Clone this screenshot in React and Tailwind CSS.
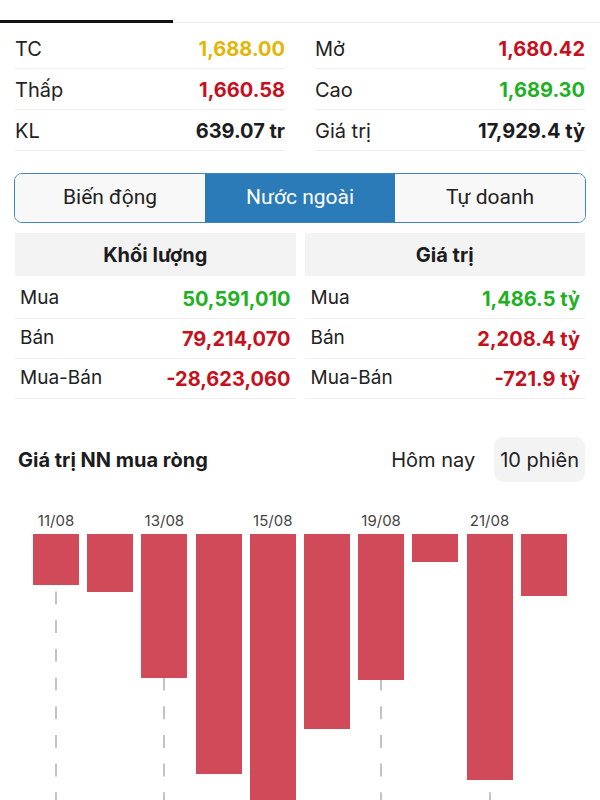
import React from "react";

const YELLOW = "text-[#e3b505]";
const RED = "text-[#c5111d]";
const GREEN = "text-[#1fb024]";
const DARK = "text-[#1c1c1e]";

const statsLeft = [
  ["TC", "1,688.00", YELLOW],
  ["Thấp", "1,660.58", RED],
  ["KL", "639.07 tr", DARK],
];
const statsRight = [
  ["Mở", "1,680.42", RED],
  ["Cao", "1,689.30", GREEN],
  ["Giá trị", "17,929.4 tỷ", DARK],
];

const volRows = [
  ["Mua", "50,591,010", GREEN],
  ["Bán", "79,214,070", RED],
  ["Mua-Bán", "-28,623,060", RED],
];
const valRows = [
  ["Mua", "1,486.5 tỷ", GREEN],
  ["Bán", "2,208.4 tỷ", RED],
  ["Mua-Bán", "-721.9 tỷ", RED],
];

const bars = [
  { h: 51, label: "11/08" },
  { h: 58 },
  { h: 144, label: "13/08" },
  { h: 240 },
  { h: 300, label: "15/08" },
  { h: 195 },
  { h: 146, label: "19/08" },
  { h: 28 },
  { h: 246, label: "21/08" },
  { h: 62 },
];

function StatCol({ rows }) {
  return (
    <div className="flex flex-col">
      {rows.map(([k, v, c]) => (
        <div
          key={k}
          className="h-[41px] pt-[2px] flex items-center justify-between border-b border-[#efefef]"
        >
          <span className="text-[20px] text-[#222]">{k}</span>
          <span className={`text-[20px] font-bold ${c}`}>{v}</span>
        </div>
      ))}
    </div>
  );
}

function Table({ title, rows, pl }) {
  return (
    <div className="flex flex-col">
      <div className="h-[43px] bg-[#f3f3f3] flex items-center justify-center text-[20px] font-bold text-[#1c1c1e]">
        {title}
      </div>
      <div className="h-[3px]" />
      {rows.map(([k, v, c]) => (
        <div
          key={k}
          className={`h-[40px] flex items-center justify-between ${pl} pr-[5px] border-b border-[#efefef]`}
        >
          <span className="text-[19px] text-[#222]">{k}</span>
          <span className={`text-[20px] font-bold ${c}`}>{v}</span>
        </div>
      ))}
    </div>
  );
}

export default function App() {
  return (
    <div className="w-[600px] h-[800px] overflow-hidden bg-white font-['Inter',sans-serif] text-[#1c1c1e]">
      <div className="h-[20px]" />
      <div className="flex items-end h-[3px]">
        <div className="w-[173px] h-[3px] bg-[#111]" />
        <div className="flex-1 h-[1px] bg-[#eeeeee]" />
      </div>

      <div className="mt-[5px] px-[15px] grid grid-cols-2 gap-x-[30px]">
        <StatCol rows={statsLeft} />
        <StatCol rows={statsRight} />
      </div>

      <div className="mt-[22px] mx-[14px] h-[50px] flex border border-[#3f86bb] rounded-[8px] overflow-hidden font-['Roboto',sans-serif] text-[21px]">
        <div className="flex-1 flex items-center justify-center bg-[#f8f8f8] text-[#222]">
          Biến động
        </div>
        <div className="flex-1 flex items-center justify-center bg-[#2b7bb8] text-white">
          Nước ngoài
        </div>
        <div className="flex-1 flex items-center justify-center bg-[#f8f8f8] text-[#222]">
          Tự doanh
        </div>
      </div>

      <div className="mt-[10px] px-[15px] grid grid-cols-2 gap-x-[9px]">
        <Table title="Khối lượng" rows={volRows} pl="pl-[5px]" />
        <Table title="Giá trị" rows={valRows} pl="pl-[6px]" />
      </div>

      <div className="mt-[38px] h-[45px] flex items-center justify-between pl-[18px] pr-[15px]">
        <span className="text-[20px] font-bold text-[#1c1c1e]">
          Giá trị NN mua ròng
        </span>
        <div className="flex items-center gap-[19px] text-[20px] text-[#222]">
          <span>Hôm nay</span>
          <span className="h-[45px] px-[6px] flex items-center rounded-[9px] bg-[#f3f3f3]">
            10 phiên
          </span>
        </div>
      </div>

      <div className="mt-[27px] pl-[33px] flex gap-[8.2px] h-[291px] overflow-hidden">
        {bars.map((b, i) => (
          <div key={i} className="w-[46px] shrink-0 flex flex-col">
            <div className="h-[25px] shrink-0 flex items-center justify-center text-[15px] text-[#444]">
              {b.label || ""}
            </div>
            <div className="relative flex-1">
              {b.label && (
                <svg
                  className="absolute left-[22px] top-0"
                  width="2"
                  height="300"
                >
                  <line
                    x1="1"
                    y1="0"
                    x2="1"
                    y2="300"
                    stroke="#b0b0b0"
                    strokeWidth="1.5"
                    strokeDasharray="13 15.7"
                  />
                </svg>
              )}
              <div
                className="relative shrink-0 bg-[#d14a59]"
                style={{ height: b.h }}
              />
            </div>
          </div>
        ))}
      </div>
    </div>
  );
}
